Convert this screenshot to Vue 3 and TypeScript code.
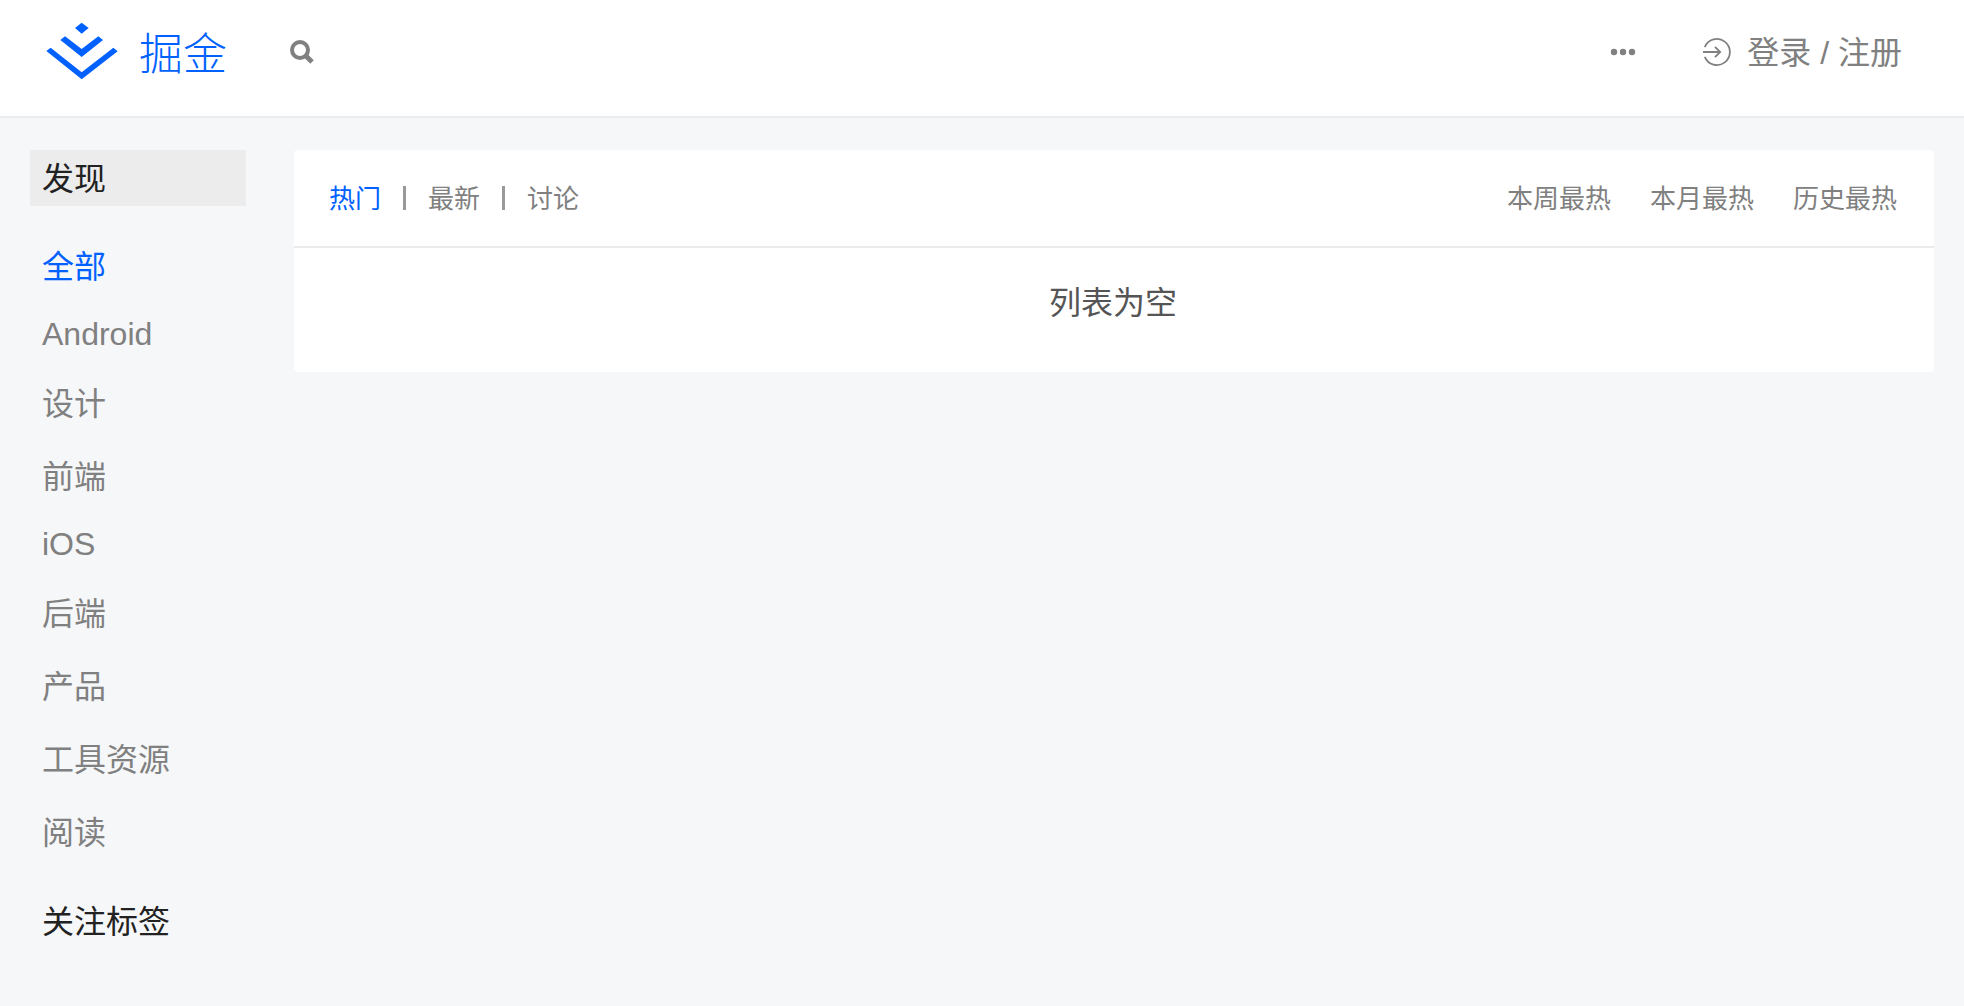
<script setup lang="ts">
import { ref } from 'vue'

interface Category {
  name: string
  latin?: boolean
}

const categories: Category[] = [
  { name: '全部' },
  { name: 'Android', latin: true },
  { name: '设计' },
  { name: '前端' },
  { name: 'iOS', latin: true },
  { name: '后端' },
  { name: '产品' },
  { name: '工具资源' },
  { name: '阅读' },
]
const sorts: string[] = ['热门', '最新', '讨论']
const ranges: string[] = ['本周最热', '本月最热', '历史最热']

const category = ref('全部')
const sort = ref('热门')
</script>

<template>
  <div class="page">
    <header class="header">
      <a class="logo" href="#" aria-label="掘金">
        <svg class="logo-mark" viewBox="0 0 216 174" aria-hidden="true">
          <path d="M107 2L128 18L107 35L87 18Z" />
          <path d="M43 54L57 43L107 81L157 43L171 54L107 105Z" />
          <path d="M1 87L14 77L107 151L202 77L215 88L107 172Z" />
        </svg>
        <span class="logo-name">掘金</span>
      </a>
      <button class="icon-button search" type="button" aria-label="搜索">
        <svg width="26" height="26" viewBox="0 0 26 26" fill="none" stroke="currentColor" stroke-width="4">
          <circle cx="11" cy="11" r="8" />
          <path d="M16 16L23 23" stroke-width="5" />
        </svg>
      </button>
      <button class="icon-button more" type="button" aria-label="更多">
        <svg width="26" height="8" viewBox="0 0 26 8" fill="currentColor">
          <circle cx="4" cy="4" r="3.2" />
          <circle cx="13" cy="4" r="3.2" />
          <circle cx="22" cy="4" r="3.2" />
        </svg>
      </button>
      <a class="login" href="#">
        <svg width="30" height="30" viewBox="0 0 30 30" fill="none" stroke="currentColor" stroke-width="1.8">
          <path d="M2.8 10.2A13 13 0 1 1 2.8 19.8" />
          <path d="M1 15H18M13 9.8L18.2 15L13 20.2" />
        </svg>
        <span class="login-text">登录 / 注册</span>
      </a>
    </header>

    <div class="body">
      <aside class="sidebar">
        <h2 class="heading active">发现</h2>
        <nav class="categories">
          <a
            v-for="item in categories"
            :key="item.name"
            href="#"
            class="category"
            :class="{ latin: item.latin, current: item.name === category }"
            @click.prevent="category = item.name"
          >{{ item.name }}</a>
        </nav>
        <h2 class="heading">关注标签</h2>
      </aside>

      <main class="card">
        <div class="toolbar">
          <nav class="sorts">
            <template v-for="(name, index) in sorts" :key="name">
              <span v-if="index > 0" class="divider"></span>
              <a href="#" :class="{ current: name === sort }" @click.prevent="sort = name">{{ name }}</a>
            </template>
          </nav>
          <nav class="ranges">
            <a v-for="name in ranges" :key="name" href="#">{{ name }}</a>
          </nav>
        </div>
        <p class="empty">列表为空</p>
      </main>
    </div>
  </div>
</template>

<style>
body {
  background: #f6f7f9;
}
</style>

<style scoped>
.page {
  font-family: "Liberation Sans", "Noto Sans CJK SC", sans-serif;
  font-size: 32px;
  line-height: 44px;
  color: #808080;
}
a {
  color: inherit;
  text-decoration: none;
}
.header {
  box-sizing: border-box;
  height: 118px;
  padding: 0 62px 12px 46px;
  display: flex;
  align-items: center;
  background: #fff;
  border-bottom: 2px solid #ebecee;
}
.logo {
  display: flex;
  align-items: center;
  gap: 21px;
  padding-bottom: 2px;
  color: #0061ff;
}
.logo-mark {
  width: 72px;
  height: 58px;
  fill: currentColor;
}
.logo-name {
  font-family: "Noto Sans CJK SC", sans-serif;
  font-size: 44px;
  font-weight: 300;
}
.icon-button {
  display: flex;
  padding: 0;
  border: 0;
  background: none;
  color: inherit;
}
.search {
  margin-left: 62px;
}
.more {
  margin-left: auto;
}
.login {
  display: flex;
  align-items: center;
  gap: 15px;
  margin-left: 66px;
}
.login-text {
  padding-top: 2px;
}
.body {
  display: flex;
  align-items: flex-start;
  gap: 48px;
  padding: 32px 30px 16px;
}
.sidebar {
  width: 216px;
  flex: none;
}
.heading {
  margin: 0;
  padding: 7px 12px 5px;
  font-size: 32px;
  font-weight: 400;
  color: #222;
}
.active {
  background: #ececec;
}
.categories {
  display: flex;
  flex-direction: column;
  gap: 28px;
  padding: 39px 12px 37px;
}
.category {
  line-height: 45px;
}
.latin {
  padding-bottom: 3px;
  line-height: 33px;
}
.current {
  color: #0061ff;
}
.card {
  flex: 1;
  background: #fff;
  border-radius: 4px;
}
.toolbar {
  display: flex;
  justify-content: space-between;
  align-items: center;
  padding: 27px 37px 25px 35px;
  font-size: 26px;
  border-bottom: 2px solid #ebebeb;
}
.sorts {
  display: flex;
  align-items: center;
  gap: 22px;
}
.divider {
  width: 3px;
  height: 24px;
  margin-bottom: 2px;
  background: #999;
}
.ranges {
  display: flex;
  gap: 39px;
}
.empty {
  margin: 0;
  padding: 33px 2px 47px 0;
  text-align: center;
  color: #555;
}
</style>
